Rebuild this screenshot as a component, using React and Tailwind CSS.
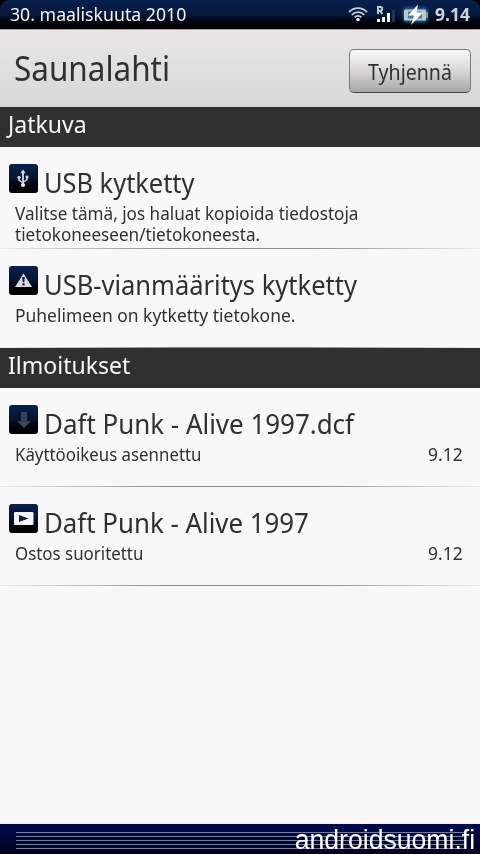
import React from "react";

const UsbIcon = () => (
  <svg viewBox="0 0 29 29" className="w-[29px] h-[29px]" fill="none" stroke="#c9cddb" strokeWidth="1.5">
    <path d="M14 8v14" strokeWidth="1.9" />
    <path d="M10 13v3l4 3M18 13v2.5l-4 3" />
    <path d="M14 5.5l2.6 3.8h-5.2z" fill="#d5d8e2" stroke="none" />
    <circle cx="14" cy="21" r="2.1" fill="#e6e8ee" stroke="none" />
    <circle cx="10" cy="13.3" r="1.5" fill="#d5d8e2" stroke="none" />
    <rect x="16.6" y="11.7" width="2.8" height="2.8" fill="#d5d8e2" stroke="none" />
  </svg>
);

const WarningIcon = () => (
  <svg viewBox="0 0 29 29" className="w-[29px] h-[29px]">
    <path d="M14.5 7.5L23 21H6z" fill="#dcdde2" />
    <path d="M13.2 11h2.6l-.5 5.3h-1.6z" fill="#141c30" />
    <rect x="13.4" y="17.3" width="2.2" height="2.2" fill="#141c30" />
  </svg>
);

const DownloadIcon = () => (
  <svg viewBox="0 0 29 29" className="w-[29px] h-[29px]">
    <path d="M12 7h6v9h4l-7 7.3L8 16h4z" fill="#3b4254" />
  </svg>
);

const PlayIcon = () => (
  <svg viewBox="0 0 29 29" className="w-[29px] h-[29px]">
    <rect x="5" y="8" width="19.5" height="13" rx="1" fill="#f4f5f8" />
    <path d="M10 11l9.5 3.5L10 18z" fill="#101d40" />
  </svg>
);

const WifiIcon = () => (
  <svg viewBox="0 0 20 16" className="w-5 h-4" fill="none" stroke="#c9ced6" strokeWidth="1.9">
    <path d="M1 6.2C6 .8 14 .8 19 6.2" />
    <path d="M3.8 8.8c3.6-3.6 8.8-3.6 12.4 0" />
    <path d="M6.6 11.4c2-2 4.8-2 6.8 0" />
    <circle cx="10" cy="13.6" r="1.7" fill="#fff" stroke="none" />
  </svg>
);

const SignalIcon = () => (
  <svg viewBox="0 0 19 17" className="w-[19px] h-[17px]">
    <path d="M2 8V1h2.4a1.8 1.8 0 0 1 0 3.7H2M4 4.8l2.3 3.2" fill="none" stroke="#c9ced6" strokeWidth="1.9" />
    <rect x="1" y="13" width="3" height="3" fill="#fff" />
    <rect x="6" y="11" width="3" height="5" fill="#fff" />
    <rect x="11" y="7" width="3" height="9" fill="#fff" />
    <rect x="16" y="4" width="3" height="12" fill="#26334d" />
  </svg>
);

const BatteryIcon = () => (
  <svg viewBox="0 0 32 24" className="w-8 h-6">
    <defs>
      <filter id="glow" x="-30%" y="-40%" width="160%" height="180%">
        <feGaussianBlur stdDeviation="1.5" />
      </filter>
    </defs>
    <rect x="4" y="4.5" width="25" height="15" rx="4" fill="#1f5f9c" filter="url(#glow)" />
    <rect x="5" y="6.5" width="22" height="11" rx="1.5" fill="#b9c9c4" />
    <rect x="27" y="9" width="2" height="6" fill="#7c9a72" />
    <rect x="9" y="8.5" width="14" height="7" fill="#4878a8" />
    <path d="M19 1.5L9 12.5h6l-3 9.5L24 9.5h-6.5z" fill="#fff" />
  </svg>
);

const SectionHeader = ({ children }) => (
  <div className="h-10 bg-[#2f302f] pl-2 text-2xl leading-[33px] text-[#f8f8f8]">
    <div className="origin-left scale-x-[0.96]">{children}</div>
  </div>
);

const Notification = ({ icon, title, titleClass, lines, textClass, time }) => (
  <div className="flex flex-col min-h-[99px] pt-[17px] whitespace-nowrap">
    <div className="flex h-9 pl-[9px] gap-[6px]">
      <div className="w-[29px] h-[29px] shrink-0 rounded-[3px] bg-linear-to-b from-[#06204f] via-[#06142f] to-black">{icon}</div>
      <div className={"text-[28px] leading-[37px] origin-left " + titleClass}>{title}</div>
    </div>
    <div className="flex justify-between mt-[3px] mb-[3px] pl-[15px] pr-[17px] text-[18px] leading-[21px]">
      <div className={"origin-left " + textClass}>
        {lines.map((line) => (
          <div key={line}>{line}</div>
        ))}
      </div>
      <div className="origin-right scale-x-[0.97]">{time}</div>
    </div>
    <div className="mt-auto h-px bg-[linear-gradient(to_right,#ececee,#8c8c8e_35%,#8c8c8e_65%,#ececee)]" />
  </div>
);

export default function App() {
  return (
    <div className="w-[480px] h-[854px] flex flex-col overflow-hidden bg-[#f8f8f8] font-['Noto_Sans',sans-serif] text-[#303030]">
      {/* Status bar */}
      <div className="bg-black h-[29px] shrink-0">
        <div className="flex justify-between h-[29px] rounded-t-[9px] bg-linear-to-b from-[#06204d] via-[#06193a] to-black pl-[10px] pr-[10px] text-[18px] leading-7 text-[#f4f4f4]">
          <div className="origin-left scale-x-[0.983]">30. maaliskuuta 2010</div>
          <div className="flex">
            <div className="mt-[6px] mr-[8px]"><WifiIcon /></div>
            <div className="mt-[6px] mr-[4px]"><SignalIcon /></div>
            <div className="mt-[3px] mr-[3px]"><BatteryIcon /></div>
            <div className="font-bold text-[#cdd1d8] origin-right scale-x-[0.97]">9.14</div>
          </div>
        </div>
      </div>

      {/* Operator name and clear button */}
      <div className="flex justify-between h-[78px] shrink-0 border-t border-[#aaa5a8] bg-linear-to-b from-[#e9e7e8] to-[#d8d7d8] pl-[14px] pr-[9px]">
        <div className="text-[34px] leading-[76px] origin-left scale-x-[0.925]">Saunalahti</div>
        <button className="mt-[19px] h-11 w-[122px] rounded-[5px] border border-[#7c7a7c] border-b-[#444] bg-linear-to-b from-[#fafafa] via-[#d8d6d7] to-[#aaa7a9] text-[22px] leading-[42px]">
          <div className="-mt-px scale-x-[0.89]">Tyhjennä</div>
        </button>
      </div>

      <SectionHeader>Jatkuva</SectionHeader>
      <Notification
        icon={<UsbIcon />}
        title="USB kytketty"
        titleClass="scale-x-[0.907]"
        lines={["Valitse tämä, jos haluat kopioida tiedostoja", "tietokoneeseen/tietokoneesta."]}
        textClass="scale-x-[0.95]"
      />
      <Notification
        icon={<WarningIcon />}
        title="USB-vianmääritys kytketty"
        titleClass="scale-x-[0.911]"
        lines={["Puhelimeen on kytketty tietokone."]}
        textClass="scale-x-[0.969]"
      />

      <SectionHeader>Ilmoitukset</SectionHeader>
      <Notification
        icon={<DownloadIcon />}
        title="Daft Punk - Alive 1997.dcf"
        titleClass="scale-x-[0.926]"
        lines={["Käyttöoikeus asennettu"]}
        textClass="scale-x-[0.935]"
        time="9.12"
      />
      <Notification
        icon={<PlayIcon />}
        title="Daft Punk - Alive 1997"
        titleClass="scale-x-[0.923]"
        lines={["Ostos suoritettu"]}
        textClass="scale-x-[0.938]"
        time="9.12"
      />

      {/* Drag handle */}
      <div className="relative mt-auto h-[30px] shrink-0 bg-linear-to-b from-[#000c50] to-[#00031c] pt-2 px-4">
        <div className="flex flex-col gap-[3px]">
          <div className="h-px bg-[#777d9e]" />
          <div className="h-px bg-[#777d9e]" />
          <div className="h-px bg-[#777d9e]" />
          <div className="h-px bg-[#777d9e]" />
          <div className="h-px bg-[#777d9e]" />
        </div>
        <div className="absolute right-[5px] top-px origin-right scale-x-[0.985] font-['Liberation_Sans',sans-serif] text-[27px] leading-[31px] text-white">
          androidsuomi.fi
        </div>
      </div>
    </div>
  );
}
